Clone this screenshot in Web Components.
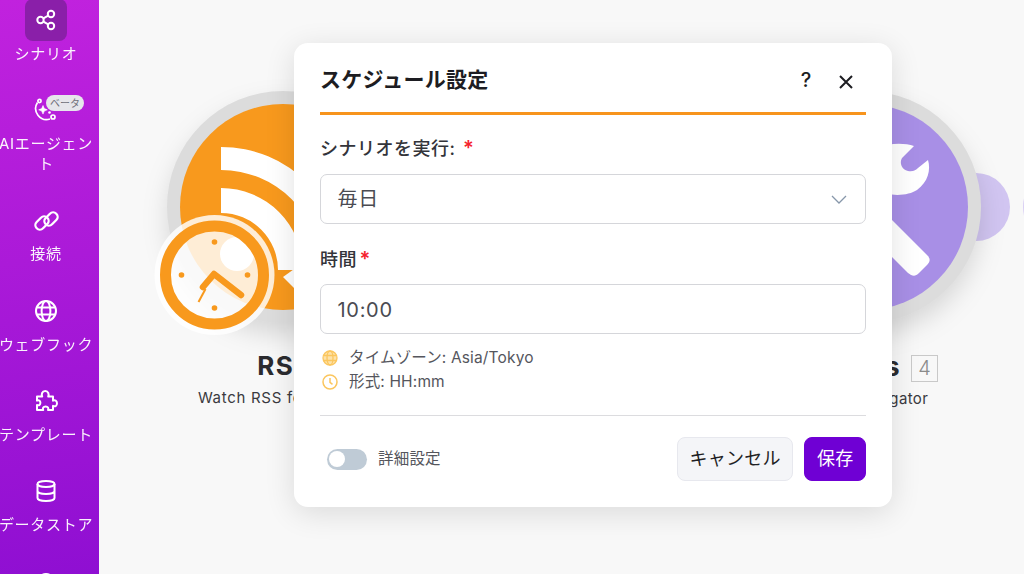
<!DOCTYPE html>
<html lang="ja"><head><meta charset="utf-8"><title>スケジュール設定</title>
<style>
html,body{margin:0;height:100%;overflow:hidden;font-family:Inter,"Noto Sans CJK JP",sans-serif}
</style></head><body>
<app-shell>
  <side-bar slot="nav">
    <nav-item label="シナリオ" active><svg viewBox="0 0 24 24" width="24" height="24" fill="none" stroke="#fff" stroke-width="2"><circle cx="6.5" cy="12" r="3.2"/><circle cx="17" cy="6" r="3.2"/><circle cx="17" cy="18" r="3.2"/><path d="M9.4 10.4l4.8-2.8M9.4 13.6l4.8 2.8"/></svg></nav-item>
    <nav-item label="AIエージェント" badge="ベータ"><svg viewBox="0 0 24 24" width="24" height="24" fill="none" stroke="#fff" stroke-width="1.7"><path d="M3.500 4.500A11 11 0 0 0 16 21"/><circle cx="5.500" cy="3" r="1.600"/><circle cx="19" cy="19" r="2"/><path d="M9 7.500l1.300 3 3 1.300-3 1.300L9 16.100l-1.300-3-3-1.300 3-1.300z" fill="#fff" stroke-width=".6"/><circle cx="15.500" cy="14.500" r="1.300" fill="#fff" stroke="none"/></svg></nav-item>
    <nav-item label="接続"><svg viewBox="0 0 26 24" width="27" height="24" fill="none" stroke="#fff" stroke-width="2.300"><rect x="1" y="9.500" width="15" height="9" rx="4.500" transform="rotate(-45 8.500 14)"/><rect x="10" y="5.500" width="15" height="9" rx="4.500" transform="rotate(-45 17.500 10)"/></svg></nav-item>
    <nav-item label="ウェブフック"><svg viewBox="0 0 24 24" width="24" height="24" fill="none" stroke="#fff" stroke-width="2"><circle cx="12" cy="12" r="10"/><ellipse cx="12" cy="12" rx="4.4" ry="10"/><path d="M2.8 8.5h18.4M2.8 15.5h18.4"/></svg></nav-item>
    <nav-item label="テンプレート"><svg viewBox="0 0 24 24" width="24" height="24" fill="none" stroke="#fff" stroke-width="2" stroke-linejoin="round"><path d="M3 7.500h5.200C7.200 5.500 8 2 11.200 2s4 3.500 3 5.500H19v4.200c2-1 4-.2 4 2.600s-2 3.600-4 2.600V21h-5c.8-2 0-3.600-2.400-3.600S8.400 19 9.200 21H3v-5c1.800.8 3.400 0 3.400-2.200S4.800 10.800 3 11.600z"/></svg></nav-item>
    <nav-item label="データストア"><svg viewBox="0 0 24 24" width="24" height="24" fill="none" stroke="#fff" stroke-width="2"><ellipse cx="12" cy="5" rx="8.500" ry="3"/><path d="M3.500 5v14c0 1.800 3.800 3 8.500 3s8.500-1.200 8.500-3V5M3.500 12c0 1.800 3.800 3 8.500 3s8.500-1.200 8.500-3"/></svg></nav-item>
    <nav-item><svg viewBox="0 0 24 24" width="24" height="24" fill="none" stroke="#fff" stroke-width="2"><circle cx="12" cy="12" r="8"/></svg></nav-item>
  </side-bar>
  <flow-canvas slot="main">
    <flow-node kind="rss" style="--x:167px;--ls:.7px;--o:4px" name="RSS" desc="Watch RSS feed items"></flow-node>
    <flow-node kind="tools" style="--x:749px;--ls:.35px;--o:33px" name="Tools" count="4" desc="Array aggregator"></flow-node>
  </flow-canvas>
  <schedule-dialog slot="overlay">
    <form-field label="シナリオを実行:" spaced><pick-box value="毎日" chevron></pick-box></form-field>
    <form-field label="時間"><pick-box value="10:00"></pick-box></form-field>
    <hint-line slot="hints" icon="globe">タイムゾーン: Asia/Tokyo</hint-line>
    <hint-line slot="hints" icon="clock">形式: HH:mm</hint-line>
    <ui-toggle slot="left">詳細設定</ui-toggle>
    <ui-button slot="right">キャンセル</ui-button>
    <ui-button slot="right" primary>保存</ui-button>
  </schedule-dialog>
</app-shell>
<script>
function def(name, html){
  customElements.define(name, class extends HTMLElement{
    connectedCallback(){
      if(this.shadowRoot) return;
      const r=this.attachShadow({mode:'open'});
      r.innerHTML=typeof html==='function'?html(this):html;
    }
  });
}
def('app-shell',`<style>
:host{display:flex;width:1024px;height:574px;overflow:hidden;position:relative;background:#f8f8f8}
.main{flex:1;position:relative;min-width:0}
</style><slot name="nav"></slot><div class="main"><slot name="main"></slot></div><slot name="overlay"></slot>`);
def('side-bar',`<style>
:host{display:flex;flex-direction:column;flex:none;width:99px;height:574px;overflow:hidden;background:linear-gradient(172deg,#c122de 0%,#ab1ad8 45%,#8f0fd2 100%);}
.in{display:flex;flex-direction:column;gap:25.200px;margin:-1px 0 0 -2px;width:96px}
</style><div class="in"><slot></slot></div>`);
def('nav-item',h=>`<style>
:host{display:flex;flex-direction:column;align-items:center;flex:none;color:#fff;position:relative}
.ic{width:42px;height:42px;border-radius:8px;display:flex;align-items:center;justify-content:center;flex:none;position:relative}
:host([active]) .ic{background:#8a1fa9}
.l{margin-top:2.500px;font:400 15px/20.500px Inter,"Noto Sans CJK JP",sans-serif;letter-spacing:.7px;text-align:center;opacity:.95;width:96px}
.b{position:absolute;left:21px;top:6px;width:38px;height:16px;border-radius:8px;background:#e6e6eb;color:#6e6e78;font:400 10px/16px Inter,"Noto Sans CJK JP",sans-serif;text-align:center}
svg{display:block}
</style><div class="ic"><slot></slot>${h.getAttribute('badge')?`<span class="b">${h.getAttribute('badge')}</span>`:''}</div>${h.getAttribute('label')?`<div class="l">${h.getAttribute('label')}</div>`:''}`);
def('flow-canvas',`<style>:host{display:block;position:absolute;inset:0;overflow:hidden}</style><slot></slot>`);
const RSS=`<svg width="232" height="232" viewBox="167 91 232 232" style="overflow:visible">
<defs><clipPath id="c"><circle cx="283" cy="207" r="103"/></clipPath></defs>
<circle cx="283" cy="207" r="116" fill="#dcdcdc" style="filter:drop-shadow(0 12px 12px rgba(0,0,0,.13))"/><circle cx="283" cy="207" r="103" fill="#f8991d"/>
<g clip-path="url(#c)" fill="#fff"><path d="M221 147A123 123 0 0 1 344 270H321A100 100 0 0 0 221 170z"/><path d="M221 188A82 82 0 0 1 303 270H278A57 57 0 0 0 221 213z"/><circle cx="237" cy="254" r="17"/><path d="M283 277l14-10v24z"/></g>
<circle cx="214.500" cy="275" r="60" fill="#fff" fill-opacity=".82"/>
<circle cx="214.500" cy="275" r="49" fill="none" stroke="#f8991d" stroke-width="11"/>
<g fill="#f8991d"><circle cx="214.500" cy="242" r="2.800"/><circle cx="214.500" cy="308" r="2.800"/><circle cx="181.500" cy="275" r="2.800"/><circle cx="247.500" cy="275" r="2.800"/></g>
<path d="M203 287l11-13 27 21" fill="none" stroke="#f8991d" stroke-width="6.500" stroke-linecap="round" stroke-linejoin="round"/><path d="M198.500 302l7-13" stroke="#f8991d" stroke-width="2"/></svg>`;
const TOOLS=`<svg width="232" height="232" viewBox="749 91 232 232" style="overflow:visible">
<circle cx="976" cy="207" r="34" fill="#d1c5f1"/><circle cx="1061" cy="207" r="38" fill="#d9cff4"/>
<circle cx="865" cy="207" r="116" fill="#dcdcdc" style="filter:drop-shadow(0 12px 12px rgba(0,0,0,.13))"/><circle cx="865" cy="207" r="103" fill="#a88fe6"/>
<path d="M880 147C890 143 905 143 914 146L902 158C899 163 902 170 908 171C913 172 916 170 918 168L928 160C931 170 928 182 917 190C908 196 890 197 875 190z" fill="#fff"/>
<path d="M875 203L927 255C931 259 930 262 927 265L919 273C915 277 912 276 908 273L860 225z" fill="#fff"/></svg>`;
def('flow-node',h=>`<style>
:host{display:flex;flex-direction:column;align-items:center;position:absolute;left:calc(var(--x) - 99px);top:91px;width:232px}
.n{font:700 26px/30px Inter,sans-serif;letter-spacing:1.500px;color:#2b2b2f;display:flex;align-items:center;gap:10px;margin:28px 0 0 var(--o);white-space:nowrap}
.c{display:inline-block;box-sizing:border-box;width:27px;height:27px;margin-top:4px;border:1.500px solid #c9c9c9;color:#8b8b8b;font:300 20px/24px Inter,sans-serif;letter-spacing:0;text-align:center}
.d{font:400 15px/20px Inter,sans-serif;letter-spacing:var(--ls);color:#3a3a3f;margin-top:7px;white-space:nowrap}
svg{display:block}
</style>${h.getAttribute('kind')==='rss'?RSS:TOOLS}<div class="n">${h.getAttribute('name')}${h.getAttribute('count')?`<span class="c">${h.getAttribute('count')}</span>`:''}</div><div class="d">${h.getAttribute('desc')}</div>`);
def('schedule-dialog',`<style>
:host{display:block;position:absolute;left:294px;top:43px;width:598px;box-sizing:border-box;background:#fff;border-radius:14px;padding:0 26px 26px;box-shadow:0 6px 30px rgba(0,0,0,.12)}
header{display:flex;align-items:center;height:69px;box-sizing:border-box;padding:20px 0 15px}
h2{flex:1;margin:0;font:700 21px/34px Inter,"Noto Sans CJK JP",sans-serif;letter-spacing:.25px;color:#1d1d22}
.rule{height:3px;background:#f7941d}
.q{font:500 20px/34px Inter,sans-serif;color:#1d1d22;width:12px;margin-right:26px;text-align:center;margin-top:-1px}
.x{display:block;margin-right:12px;margin-top:3px}
.body{display:flex;flex-direction:column;gap:25px;margin-top:23px}
.hints{margin-top:12px}
hr{border:0;height:1px;background:#dcdcdf;margin:21px 0 21px}
footer{display:flex;align-items:center;justify-content:space-between}
.r{display:flex;gap:11px}
</style><header><h2>スケジュール設定</h2><span class="q">?</span><svg class="x" width="16" height="16" viewBox="0 0 16 16" fill="none" stroke="#1d1d22" stroke-width="2"><path d="M2 2l12 12M14 2L2 14"/></svg></header><div class="rule"></div>
<div class="body"><slot></slot></div><div class="hints"><slot name="hints"></slot></div><hr>
<footer><slot name="left"></slot><div class="r"><slot name="right"></slot></div></footer>`);
def('form-field',h=>`<style>
:host{display:flex;flex-direction:column;gap:${h.hasAttribute('spaced')?'14px':'13px'}}
label{font:500 18px/22px Inter,"Noto Sans CJK JP",sans-serif;letter-spacing:.5px;color:#33343a;display:block;height:22px}
i{font-style:normal;color:#f5222d;font-size:20px;line-height:0;margin-left:${h.hasAttribute('spaced')?'7.500px':'2.500px'};font-weight:600}
</style><label>${h.getAttribute('label')}<i>*</i></label><slot></slot>`);
def('pick-box',h=>`<style>
:host{display:flex;align-items:center;justify-content:space-between;box-sizing:border-box;height:50px;border:1.500px solid #d5d6da;border-radius:7px;padding:0 18px 0 16.500px;background:#fff;font:400 20px/26px Inter,"Noto Sans CJK JP",sans-serif;letter-spacing:.7px;color:#4a4b52}
span.d{margin-top:2px}
</style><span class="${h.hasAttribute('chevron')?'':'d'}">${h.getAttribute('value')}</span>${h.hasAttribute('chevron')?`<svg width="16" height="9" viewBox="0 0 16 9" fill="none" stroke="#8797aa" stroke-width="1.300"><path d="M1 1l7 7 7-7"/></svg>`:''}`);
def('hint-line',h=>`<style>
:host{display:flex;align-items:center;gap:11px;height:24px;padding-left:2px;font:400 15.500px/24px Inter,"Noto Sans CJK JP",sans-serif;letter-spacing:.15px;color:#55565d}
svg{flex:none}
</style>${h.getAttribute('icon')==='globe'?`<svg width="16" height="16" viewBox="0 0 16 16" fill="#fde2a9" stroke="#fbc65e" stroke-width="1.300"><circle cx="8" cy="8" r="7"/><ellipse cx="8" cy="8" rx="3" ry="7" fill="none"/><path d="M1.500 5.500h13M1.500 10.500h13" fill="none"/></svg>`:`<svg width="16" height="16" viewBox="0 0 16 16" fill="none" stroke="#fbc65e" stroke-width="1.500"><circle cx="8" cy="8" r="7"/><path d="M8 4v4.300l2.500 2"/></svg>`}<span><slot></slot></span>`);
def('ui-toggle',`<style>
:host{display:flex;align-items:center;gap:11px;padding-left:7px;font:400 15.500px/22px Inter,"Noto Sans CJK JP",sans-serif;letter-spacing:.2px;color:#55565d}
.t{width:40px;height:21px;border-radius:11px;background:#bfcbd6;position:relative;flex:none}
.k{position:absolute;left:2px;top:2.500px;width:16px;height:16px;border-radius:50%;background:#fff}
</style><span class="t"><span class="k"></span></span><span><slot></slot></span>`);
def('ui-button',`<style>
:host{display:flex;align-items:center;justify-content:center;box-sizing:border-box;height:44px;padding:0 11.500px;border-radius:8px;border:1px solid #e7e8ee;background:#f4f5f8;color:#1f1f24;font:400 18px/24px Inter,"Noto Sans CJK JP",sans-serif;letter-spacing:.3px;flex:none}
:host([primary]){background:#6f00d4;border-color:#6f00d4;color:#fff}
</style><slot></slot>`);
</script>
</body></html>
